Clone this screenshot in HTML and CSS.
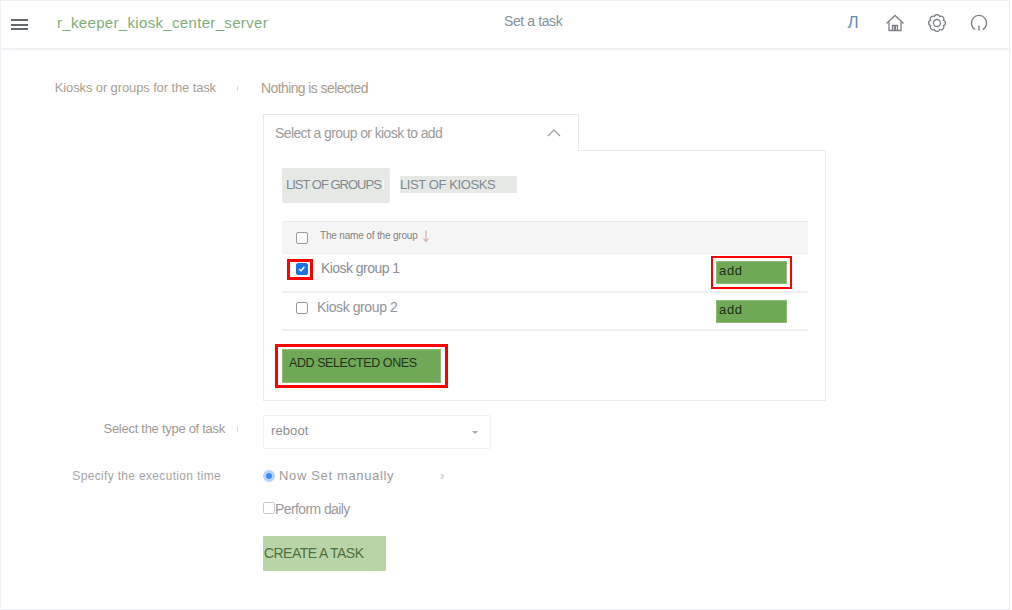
FILE: index.html
```html
<!DOCTYPE html>
<html lang="en">
<head>
    <meta charset="UTF-8">
    <meta name="viewport" content="width=device-width, initial-scale=1.0">
    <title>Set a task</title>
    <link rel="stylesheet" href="styles.css">
</head>
<body>

<div class="page">
    <header class="topbar">
        <div class="burger"><span></span><span></span><span></span></div>
        <div class="app-name">r_keeper_kiosk_center_server</div>
        <div class="page-title">Set a task</div>
        <div class="top-icons">
            <span class="user-letter">Л</span>
            <svg class="top-icon" viewBox="0 0 18 18" fill="none" stroke="#7d8186" stroke-width="1.3">
                <path d="M.5 9.500 9 1.500l8.500 8"/>
                <path d="M3 8v8.500h12V8"/>
                <path d="M6.500 16.500V11.500h2v5M9.500 16.500V11.500h2v5"/>
            </svg>
            <svg class="top-icon" viewBox="0 0 18 18" fill="none" stroke="#7d8186" stroke-width="1.3">
                <path d="M15.470 6.320A2.800 2.800 0 0 1 15.470 11.680 2.800 2.800 0 0 1 11.680 15.470 2.800 2.800 0 0 1 6.320 15.470 2.800 2.800 0 0 1 2.530 11.680 2.800 2.800 0 0 1 2.530 6.320 2.800 2.800 0 0 1 6.320 2.530 2.800 2.800 0 0 1 11.680 2.530 2.800 2.800 0 0 1 15.470 6.320z"/>
                <circle cx="9" cy="9" r="3.500"/>
            </svg>
            <svg class="top-icon" viewBox="0 0 18 18" fill="none" stroke="#7d8186" stroke-width="1.4">
                <path d="M5.200 15.600A7.600 7.600 0 1 1 12.800 15.600"/>
                <path d="M9 11.500v5"/>
            </svg>
        </div>
    </header>

    <main class="content">
        <div class="row row-targets">
            <div class="label label-targets">Kiosks or groups for the task</div>
            <span class="tick"></span>
            <div class="nothing">Nothing is selected</div>
        </div>

        <div class="picker">
            <div class="picker-tab">
                <span class="picker-title">Select a group or kiosk to add</span>
                <svg class="chevron" viewBox="0 0 14 8" fill="none" stroke="#a3a5a8" stroke-width="1.4"><path d="M1 7l6-6 6 6"/></svg>
            </div>
            <div class="picker-body">
                <div class="switcher">
                    <button class="switch switch-groups">LIST OF GROUPS<i class="switch-end"></i></button>
                    <button class="switch switch-kiosks">LIST OF KIOSKS</button>
                </div>

                <div class="table">
                    <div class="table-head">
                        <span class="box"></span>
                        <span class="col-name">The name of the group</span>
                        <svg class="sort" viewBox="0 0 8 14" fill="none" stroke="#d8b8b4" stroke-width="1.3"><path d="M4 1v11M1.500 9.500 4 12.500l2.500-3"/></svg>
                    </div>
                    <div class="table-row row-first">
                        <span class="mark-box">
                            <span class="box box-checked">
                                <svg viewBox="0 0 12 12" fill="none" stroke="#fff" stroke-width="1.8"><path d="M2.500 6l2.300 2.300 4-5"/></svg>
                            </span>
                        </span>
                        <span class="group-name">Kiosk group 1</span>
                        <button class="add-btn marked-add">add</button>
                    </div>
                    <div class="table-row row-second">
                        <span class="box box-second"></span>
                        <span class="group-name name-second">Kiosk group 2</span>
                        <button class="add-btn">add</button>
                    </div>
                </div>

                <div class="mark-selected">
                    <button class="add-selected">ADD SELECTED ONES</button>
                </div>
            </div>
        </div>

        <div class="row row-type">
            <div class="label label-type">Select the type of task</div>
            <span class="tick"></span>
            <div class="select">
                <span class="select-value">reboot</span>
                <i class="caret"></i>
            </div>
        </div>

        <div class="row row-time">
            <div class="label label-time">Specify the execution time</div>
            <div class="time-options">
                <span class="radio"></span>
                <span class="time-text">Now Set manually</span>
                <span class="time-arrow">›</span>
            </div>
        </div>

        <div class="daily">
            <span class="box box-daily"></span>
            <span class="daily-text">Perform daily</span>
        </div>

        <button class="create-btn">CREATE A TASK</button>
    </main>
</div>

</body>
</html>
```
FILE: styles.css
```css
* {
    box-sizing: border-box;
}

body {
    margin: 0;
    background-color: #fff;
    font-family: "Liberation Sans", Arial, sans-serif;
    color: #999;
}

button {
    font-family: inherit;
    border: 0;
    padding: 0;
    cursor: pointer;
    text-align: left;
}

.page {
    width: 1010px;
    height: 610px;
    border: 1px solid #eef0f6;
    overflow: hidden;
}

/* header */
.topbar {
    height: 49px;
    display: flex;
    align-items: center;
    border-bottom: 2px solid #f0f1f4;
    position: relative;
}

.burger {
    width: 17px;
    margin-left: 10px;
    display: flex;
    flex-direction: column;
    gap: 2.5px;
}

.burger span {
    height: 2px;
    background-color: #66696c;
}

.app-name {
    margin-left: 29px;
    margin-bottom: 4px;
    font-size: 15px;
    letter-spacing: 0.33px;
    color: #7fae7a;
}

.page-title {
    position: absolute;
    left: 503px;
    top: 12px;
    font-size: 14px;
    letter-spacing: -0.4px;
    color: #83929c;
}

.top-icons {
    margin-left: auto;
    margin-bottom: 4px;
    display: flex;
    align-items: center;
    gap: 24px;
    padding-right: 21px;
}

.user-letter {
    width: 18px;
    font-size: 17px;
    color: #5f8fc4;
    text-align: center;
}

.top-icon {
    width: 18px;
    height: 18px;
}

/* form */
.content {
    padding-top: 29px;
}

.row {
    display: flex;
    align-items: center;
}

.label {
    width: 236px;
    text-align: right;
    font-size: 12px;
    color: #a89f94;
}

.label-targets {
    margin-bottom: 2px;
    padding-right: 21px;
    font-size: 13px;
    letter-spacing: -0.12px;
}

.label-type {
    padding-right: 12px;
    font-size: 13px;
    letter-spacing: -0.28px;
    color: #a09a92;
}

.label-time {
    flex: none;
    padding-right: 16px;
    letter-spacing: 0.33px;
    color: #a5a5a5;
}

.tick {
    width: 1px;
    height: 5px;
    background-color: #d8d8d8;
}

.nothing {
    margin-left: 23px;
    font-size: 14px;
    letter-spacing: -0.6px;
    color: #ab9d8c;
}

.row-targets {
    height: 18px;
}

.picker {
    margin-top: 17px;
    margin-left: 262px;
    width: 563px;
}

.picker-tab {
    width: 316px;
    height: 37px;
    margin-bottom: -1px;
    padding: 0 17px 0 11px;
    display: flex;
    align-items: center;
    justify-content: space-between;
    background-color: #fff;
    border: 1px solid #e8e9ea;
    border-bottom: 0;
    position: relative;
}

.picker-title {
    font-size: 14px;
    letter-spacing: -0.6px;
    color: #9b9b9b;
}

.chevron {
    width: 14px;
    height: 8px;
}

.picker-body {
    height: 251px;
    padding: 17px 18px 0;
    border: 1px solid #e8e9ea;
}

.switcher {
    display: flex;
    align-items: center;
    gap: 10px;
}

.switch {
    background-color: #e6e8e5;
    color: #7f8a92;
    font-size: 13px;
    letter-spacing: -0.4px;
    white-space: nowrap;
}

.switch-groups {
    width: 108px;
    height: 35px;
    padding: 0 0 2px 4px;
    border-radius: 2px;
    display: flex;
    align-items: center;
    letter-spacing: -1px;
}

.switch-end {
    width: 1px;
    height: 9px;
    margin-left: 2px;
    background-color: #fff;
}

.switch-kiosks {
    width: 117px;
    height: 17px;
    margin-bottom: 2px;
}

.table {
    margin-top: 18px;
    width: 526px;
}

.table-head {
    height: 33px;
    padding-left: 14px;
    display: flex;
    align-items: center;
    background-color: #f5f5f5;
    border-top: 1px solid #ebebeb;
    border-bottom: 1px solid #eee;
}

.col-name {
    margin-left: 12px;
    margin-bottom: 5px;
    font-size: 10px;
    letter-spacing: -0.17px;
    color: #85827f;
}

.sort {
    width: 8px;
    height: 14px;
    margin-left: 4px;
    margin-bottom: 4px;
}

.table-row {
    display: flex;
    align-items: center;
    padding-left: 14px;
    border-bottom: 2px solid #f0f0f0;
}

.row-first {
    height: 39px;
}

.row-second {
    height: 38px;
}

.box {
    flex: none;
    width: 12px;
    height: 12px;
    background-color: #fff;
    border: 1px solid #9a9a9a;
    border-radius: 2px;
}

.box-checked {
    background-color: #1a73e8;
    border-color: #1a73e8;
    display: flex;
}

.box-second {
    margin-bottom: 6px;
}

/* red marks drawn over the screenshot */
.mark-box {
    flex: none;
    display: flex;
    margin-left: -9px;
    margin-right: -5px;
    margin-bottom: 7px;
    padding: 1px 2px 2px 6px;
    border: 3px solid #f00;
}

.group-name {
    margin-left: 13px;
    margin-bottom: 9px;
    font-size: 14px;
    letter-spacing: -0.55px;
    color: #8b8d9a;
}

.name-second {
    margin-left: 9px;
    margin-bottom: 8px;
    letter-spacing: -0.4px;
    color: #93939a;
}

.add-btn {
    width: 71px;
    height: 23px;
    margin-left: auto;
    margin-right: 21px;
    padding: 0 0 4px 2px;
    background-color: #6fa957;
    border: 1px solid #8dbb78;
    font-size: 13px;
    letter-spacing: 0.7px;
    color: #20301a;
}

.marked-add {
    outline: 2px solid #f00;
    outline-offset: 3px;
}

.mark-selected {
    width: 173px;
    margin-top: 13px;
    margin-left: -7px;
    padding: 2px 4px;
    border: 3px solid #f00;
}

.add-selected {
    display: block;
    width: 159px;
    height: 34px;
    padding: 0 0 6px 6px;
    background-color: #6fa957;
    border: 1px solid #8dbb78;
    font-size: 12.5px;
    letter-spacing: -0.42px;
    color: #25321c;
}

.row-type {
    margin-top: 14px;
    height: 34px;
}

.row-type .label {
    margin-bottom: 7px;
}

.row-type .tick {
    margin-bottom: 5px;
}

.select {
    width: 228px;
    height: 34px;
    margin-left: 25px;
    padding: 0 7px;
    display: flex;
    align-items: center;
    justify-content: space-between;
    border: 1px solid #f1f1f1;
    border-radius: 2px;
    font-size: 13px;
    letter-spacing: 0.1px;
    color: #8f8f8f;
}

.select-value {
    margin-bottom: 3px;
}

.caret {
    width: 0;
    height: 0;
    margin-right: 5px;
    border-left: 3px solid transparent;
    border-right: 3px solid transparent;
    border-top: 3px solid #a8a8a8;
}

.row-time {
    margin-top: 19px;
    height: 16px;
}

.time-options {
    margin-left: 26px;
    display: flex;
    align-items: center;
}

.radio {
    width: 12px;
    height: 12px;
    border-radius: 50%;
    background-color: #3d8bf0;
    border: 3px solid #b5d4fb;
}

.time-text {
    margin-left: 4px;
    margin-bottom: 1px;
    font-size: 13px;
    letter-spacing: 0.65px;
    color: #9c9c9c;
}

.time-arrow {
    margin-left: 46px;
    font-size: 12px;
    color: #bbb;
}

.daily {
    margin-top: 17px;
    margin-left: 262px;
    display: flex;
    align-items: flex-start;
}

.box-daily {
    margin-top: 1px;
    border: 1px solid #c9c9c9;
}

.daily-text {
    font-size: 14px;
    letter-spacing: -0.6px;
    color: #9a9a9a;
}

.create-btn {
    display: block;
    width: 123px;
    height: 35px;
    margin-top: 19px;
    margin-left: 262px;
    padding: 0 0 2px 1px;
    background-color: #b8d5a8;
    border-radius: 1px;
    font-size: 14px;
    letter-spacing: -0.55px;
    color: #4f7040;
}
```
